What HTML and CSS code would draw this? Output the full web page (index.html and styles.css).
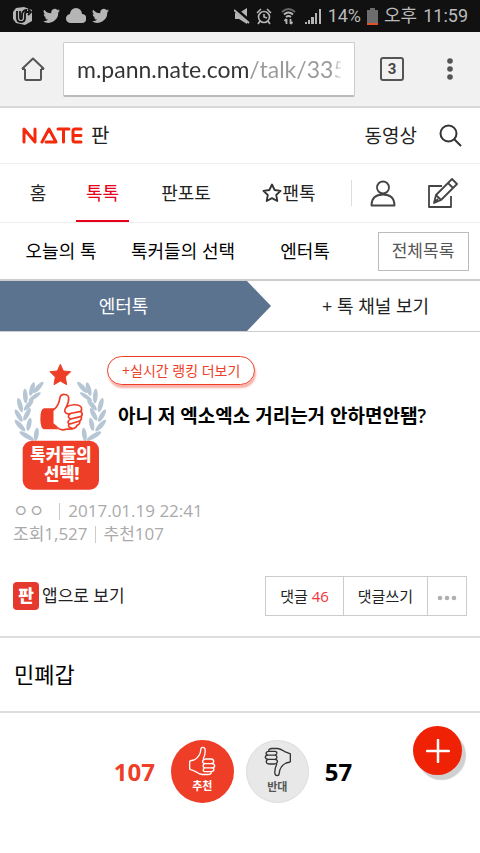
FILE: index.html
```
<!DOCTYPE html>
<html lang="ko">
<head>
    <meta charset="UTF-8">
    <meta name="viewport" content="width=device-width, initial-scale=1.0">
    <title>네이트 판</title>
    <link rel="stylesheet" href="styles.css">
</head>
<body>

    <!-- Shared shapes -->
    <svg class="defs" aria-hidden="true">
        <symbol id="bird" viewBox="0 0 24 20">
            <path d="M24 2.4a10 10 0 0 1-2.8.8A5 5 0 0 0 23.300.5a10 10 0 0 1-3.100 1.200A4.900 4.900 0 0 0 11.800 6.200 14 14 0 0 1 1.700 1a4.900 4.900 0 0 0 1.500 6.600A5 5 0 0 1 1 7a4.900 4.900 0 0 0 3.900 4.900 5 5 0 0 1-2.200.1 4.900 4.900 0 0 0 4.600 3.400A10 10 0 0 1 0 17.400 14 14 0 0 0 21.500 5a10 10 0 0 0 2.500-2.600z"/>
        </symbol>
        <symbol id="thumb" viewBox="294 136 88 90">
            <path d="M299 181L312 178C325 171 332 160 333 146C333 138 345 137 346 147C347 157 344 167 340 175M346 175H364C375 176 374 188 365 189H346M365 189C379 190 377 201 367 202H346M367 202C376 204 374 213 364 213H345M364 213C366 218 362 222 354 222H338C323 221 320 212 310 210L299 206V181M346 175C336 177 335 188 346 189C337 191 338 201 346 202C338 204 338 213 345 213"/>
        </symbol>
        <symbol id="laurel" viewBox="39 54 282 384" overflow="visible">
            <ellipse cx="60" cy="242" rx="7" ry="23" transform="rotate(-42 60 242)"/>
            <ellipse cx="56" cy="212" rx="7" ry="21" transform="rotate(-30 56 212)"/>
            <ellipse cx="60" cy="180" rx="7" ry="22" transform="rotate(-16 60 180)"/>
            <ellipse cx="76" cy="153" rx="7" ry="22" transform="rotate(-4 76 153)"/>
            <ellipse cx="96" cy="132" rx="7" ry="21" transform="rotate(16 96 132)"/>
            <ellipse cx="115" cy="127" rx="7" ry="22" transform="rotate(42 115 127)"/>
            <ellipse cx="104" cy="155" rx="6" ry="22" transform="rotate(55 104 155)"/>
            <ellipse cx="86" cy="180" rx="7" ry="21" transform="rotate(40 86 180)"/>
            <ellipse cx="81" cy="208" rx="7" ry="21" transform="rotate(28 81 208)"/>
            <ellipse cx="87" cy="238" rx="7" ry="20" transform="rotate(12 87 238)"/>
            <ellipse cx="109" cy="268" rx="7" ry="20" transform="rotate(8 109 268)"/>
            <ellipse cx="80" cy="273" rx="7" ry="25" transform="rotate(-60 80 273)"/>
        </symbol>
    </svg>

    <!-- Phone status bar -->
    <div class="status">
        <div class="status-group">
            <svg width="20" height="20" viewBox="0 0 20 20">
                <path d="M3 2l8-1 8 3v11l-7 4-9-2-3-4V6z" fill="#b5b5b5"/>
                <path d="M4 5v7q0 4 4 4t4-4V8q0-2 2-2h2M7 5v6q0 2 1 2t1-2V8q1-4 5-4M15 3l3 3-3 3" fill="none" stroke="#111" stroke-width="1.800"/>
            </svg>
            <svg class="bird first-bird" width="17" height="16"><use href="#bird"/></svg>
            <svg width="20" height="16" viewBox="0 0 20 16">
                <path d="M5 15a4.500 4.500 0 0 1-1-9 6 6 0 0 1 12 0 4.500 4.500 0 0 1 0 9z" fill="#b5b5b5"/>
            </svg>
            <svg class="bird" width="17" height="16"><use href="#bird"/></svg>
        </div>
        <div class="status-group status-right">
            <svg width="16" height="18" viewBox="0 0 16 18">
                <path d="M1 6h4l8-5v16l-8-5H1z" fill="#b5b5b5"/>
                <path d="M0 1l16 14" stroke="#111" stroke-width="4"/>
                <path d="M0 3l15 13" stroke="#b5b5b5" stroke-width="2"/>
            </svg>
            <svg width="16" height="17" viewBox="0 0 16 17" fill="none" stroke="#b5b5b5" stroke-width="1.600">
                <circle cx="8" cy="9" r="5.500"/>
                <path d="M8 6v3l3 1M1 5l4-4M15 5l-4-4M4 13l-2 3M12 13l2 3"/>
            </svg>
            <svg class="wifi" width="15" height="18" viewBox="0 0 15 18" fill="none" stroke="#b5b5b5" stroke-width="1.800">
                <path d="M1 5q6.500-6 13 0" stroke="#666"/>
                <path d="M3 7.500q4.500-4 9 0M5 10q2.500-2 5 0M5.500 17v-5M3.500 14l2-2M9.500 12v5M11.500 15l-2 2"/>
            </svg>
            <svg width="17" height="17" viewBox="0 0 17 17" fill="#b5b5b5">
                <path d="M0 14h2v2H0zM3 12h2v4H3zM6 9h3v7H6zM10 5h2v11h-2zM14 1h2v15h-2z"/>
            </svg>
            <span>14%</span>
            <svg width="11" height="17" viewBox="0 0 11 17">
                <path d="M3 0h5v2h3v15H0V2h3z" fill="#6d6d6d"/>
                <path d="M0 15h11v2H0z" fill="#e0512b"/>
            </svg>
            <span>오후</span>
            <span>11:59</span>
        </div>
    </div>

    <!-- Browser toolbar -->
    <div class="toolbar">
        <button class="tool" aria-label="홈으로">
            <svg width="24" height="25" viewBox="0 0 24 25" fill="none" stroke="#555" stroke-width="2" stroke-linejoin="round">
                <path d="M4 12v10q0 1 1 1h14q1 0 1-1V12M1 12h3M20 12h3M1 12L12 1.500 23 12"/>
            </svg>
        </button>
        <div class="url-box">
            <input class="url" type="text" aria-label="주소" value="m.pann.nate.com/talk/335">
        </div>
        <button class="tool tabs-count">3</button>
        <button class="tool menu" aria-label="메뉴">
            <svg width="6" height="22" viewBox="0 0 6 22" fill="#555">
                <circle cx="3" cy="3" r="2.800"/><circle cx="3" cy="11" r="2.800"/><circle cx="3" cy="19" r="2.800"/>
            </svg>
        </button>
    </div>

    <!-- Site header -->
    <header class="header">
        <a class="logo" href="#">
            <svg width="61" height="17" viewBox="0 0 61 17" fill="none" stroke="#f42a0c" stroke-width="3" stroke-linecap="round" stroke-linejoin="round" role="img" aria-label="NATE">
                <path d="M2 15V2l11 13V2M24 15h10L27 2l-7 13M36 2h11M41.500 2v13M59 2h-6q-2 0-2 2v9q0 2 2 2h6M51 8.500h8"/>
            </svg>
            <span>판</span>
        </a>
        <a class="video" href="#">동영상</a>
        <button class="search" aria-label="검색">
            <svg width="23" height="23" viewBox="0 0 23 23" fill="none" stroke="#333" stroke-width="2">
                <circle cx="9.500" cy="9.500" r="8"/><path d="M15 15l7 7"/>
            </svg>
        </button>
    </header>

    <nav class="nav">
        <a href="#">홈</a>
        <a class="active" href="#">톡톡</a>
        <a href="#">판포토</a>
        <a href="#">
            <svg width="20" height="20" viewBox="0 0 20 20" fill="none" stroke="#333" stroke-width="1.800" stroke-linejoin="round">
                <path d="M10 1.500l2.600 5.500 6 .8-4.400 4.200 1.100 6L10 15.100 4.700 18l1.100-6L1.400 7.800l6-.8z"/>
            </svg>
            팬톡
        </a>
        <div class="nav-icons">
            <a href="#" aria-label="내 정보">
                <svg width="26" height="27" viewBox="0 0 26 27" fill="none" stroke="#444" stroke-width="1.800">
                    <circle cx="13" cy="7.500" r="6"/><path d="M1.500 25.500q0-11 11.500-11t11.500 11z" stroke-linejoin="round"/>
                </svg>
            </a>
            <a href="#" aria-label="글쓰기">
                <svg width="31" height="31" viewBox="0 0 31 31" fill="none" stroke="#444" stroke-width="1.800" stroke-linejoin="round">
                    <path d="M15 8H2v21h22V18"/>
                    <path d="M7 25l2-8L25 1l5 5-16 16zM9 17l5 5M21 5l5 5M7 25l4-4"/>
                </svg>
            </a>
        </div>
    </nav>

    <nav class="subnav">
        <a href="#">오늘의 톡</a>
        <a href="#">톡커들의 선택</a>
        <a href="#">엔터톡</a>
        <button class="all-list">전체목록</button>
    </nav>

    <div class="channel">
        <a class="current" href="#">엔터톡</a>
        <a class="more" href="#">+ 톡 채널 보기</a>
    </div>

    <article>
        <div class="post-head">
            <div class="post-top">
                <svg class="badge" width="94" height="128" viewBox="39 54 282 384">
                    <path d="M181 58l9 20 22 2-16 16 4 23-19-11-19 11 4-23-16-16 22-2z" fill="#ee3e28" stroke="#ee3e28" stroke-width="3" stroke-linejoin="round"/>
                    <g fill="#b7c6d4">
                        <use href="#laurel" x="39" y="54" width="282" height="384"/>
                        <use href="#laurel" x="39" y="54" width="282" height="384" transform="translate(362 0) scale(-1 1)"/>
                    </g>
                    <path d="M168 190H132Q121 192 121 221 121 252 134 253H176L158 238Z" fill="#ee3e28"/>
                    <path d="M163 192C175 184 178 170 180 158C182 145 205 145 206 159C207 170 203 178 199 186C210 178 237 176 244 187Q247 194 242 199 250 206 244 214 246 224 239 228 241 238 231 241 226 254 200 252C187 258 177 253 170 246L158 236V197Z" fill="#fff" stroke="#ee3e28" stroke-width="5" stroke-linejoin="round"/>
                    <path d="M199 186Q187 201 204 207L242 199M213 205Q198 215 211 222L244 214M210 223Q198 232 209 237L239 228M207 237Q202 247 215 249" fill="none" stroke="#ee3e28" stroke-width="5" stroke-linecap="round"/>
                    <rect x="68" y="287" width="229" height="147" rx="28" fill="#ee3e28"/>
                    <text class="badge-text" text-anchor="middle"><tspan x="183" y="348">톡커들의</tspan><tspan x="185" y="405">선택!</tspan></text>
                </svg>
                <div>
                    <a class="ranking" href="#">+실시간 랭킹 더보기</a>
                    <h1>아니 저 엑소엑소 거리는거 안하면안됌?</h1>
                </div>
            </div>
            <div class="meta">
                <div><span class="author">ㅇㅇ</span><span class="bar">2017.01.19 22:41</span></div>
                <div><span>조회1,527</span><span class="bar">추천107</span></div>
            </div>
            <div class="actions">
                <a class="app-link" href="#">
                    <svg width="26" height="28" viewBox="0 0 26 28">
                        <rect width="26" height="28" rx="4" fill="#e5392e"/>
                        <text class="app-text" x="13" y="20" text-anchor="middle">판</text>
                    </svg>
                    앱으로 보기
                </a>
                <div class="button-group">
                    <button>댓글 <em>46</em></button>
                    <button>댓글쓰기</button>
                    <button class="dots" aria-label="더보기">
                        <svg width="20" height="6" viewBox="0 0 20 6" fill="#b0b0b0">
                            <circle cx="3" cy="3" r="2.300"/><circle cx="10" cy="3" r="2.300"/><circle cx="17" cy="3" r="2.300"/>
                        </svg>
                    </button>
                </div>
            </div>
        </div>

        <p class="content">민폐갑</p>

        <div class="votes">
            <strong class="up-count">107</strong>
            <button class="vote up">
                <svg width="29" height="30"><use href="#thumb"/></svg>
                추천
            </button>
            <button class="vote down">
                <svg width="29" height="30"><use href="#thumb"/></svg>
                반대
            </button>
            <strong>57</strong>
            <button class="fab" aria-label="추가">
                <svg width="24" height="24" viewBox="0 0 24 24" stroke="#fff" stroke-width="2.500" stroke-linecap="round">
                    <path d="M12 1v22M1 12h22"/>
                </svg>
            </button>
        </div>
    </article>

</body>
</html>
```
FILE: styles.css
```
* {
    box-sizing: border-box;
}
body {
    margin: 0;
    background-color: #fff;
    color: #222;
    font-family: "Open Sans", "Noto Sans CJK KR", sans-serif;
    font-size: 18px;
    line-height: 24px;
}
a {
    color: inherit;
    text-decoration: none;
}
button {
    padding: 0;
    border: 0;
    background: none;
    color: inherit;
    font: inherit;
    cursor: pointer;
}
svg {
    display: block;
    flex: none;
}
.defs {
    position: absolute;
    width: 0;
    height: 0;
}

/* Status bar */
.status {
    display: flex;
    justify-content: space-between;
    height: 32px;
    padding: 0 12px 0 13px;
    background-color: #111;
    color: #bbb;
    font-family: Roboto, "Noto Sans CJK KR", sans-serif;
}
.status-group {
    display: flex;
    align-items: center;
    gap: 6px;
}
.first-bird {
    margin-left: 4px;
}
.wifi {
    margin: 0 3px;
}
.bird {
    fill: #b5b5b5;
}

/* Browser toolbar */
.toolbar {
    display: flex;
    align-items: center;
    height: 76px;
    padding: 0 0 0 2px;
    background-color: #f1f1f1;
    border-bottom: 2px solid #d8d8d8;
}
.tool {
    display: flex;
    align-items: center;
    justify-content: center;
    width: 61px;
    height: 48px;
}
.url-box {
    flex: 1;
    min-width: 0;
    height: 55px;
    padding: 0 13px;
    background-color: #fff;
    border: 1px solid #ccc;
    border-bottom: 2px solid #bbb;
    border-radius: 2px;
}
.url {
    width: 100%;
    height: 52px;
    padding: 0;
    border: 0;
    outline: 0;
    background: linear-gradient(to right, #333 173px, #999 173px, #999 255px, #eee);
    background-clip: text;
    color: transparent;
    font-family: Lato, sans-serif;
    font-size: 23px;
}
.tabs-count {
    width: 24px;
    height: 24px;
    margin: 0 15px 0 25px;
    border: 2px solid #555;
    border-radius: 3px;
    color: #444;
    font-family: Roboto, sans-serif;
    font-size: 15px;
    font-weight: 700;
}

/* Site header */
.header {
    display: flex;
    align-items: center;
    height: 56px;
    padding: 0 18px 0 22px;
    border-bottom: 1px solid #eee;
}
.logo {
    display: flex;
    align-items: center;
    gap: 8px;
    margin-right: auto;
    font-size: 20px;
}
.video {
    margin-right: 22px;
    font-size: 19px;
}
.nav {
    display: grid;
    grid-template-columns: 76fr 53fr 114fr 92fr 145fr;
    height: 59px;
    border-bottom: 1px solid #eee;
}
.nav > a {
    display: flex;
    align-items: center;
    justify-content: center;
}
.nav .active {
    color: #e60019;
    border-bottom: 2px solid #e60019;
    padding-top: 2px;
}
.nav-icons {
    display: flex;
    align-items: center;
    justify-content: space-between;
    height: 26px;
    margin: auto 22px auto 16px;
    padding-left: 18px;
    border-left: 1px solid #ddd;
}
.subnav {
    display: grid;
    grid-template-columns: 122fr 122fr 122fr 114fr;
    align-items: center;
    justify-items: center;
    height: 58px;
    border-bottom: 2px solid #ccc;
    color: #000;
}
.all-list {
    width: 91px;
    height: 39px;
    border: 1px solid #bbb;
    color: #555;
    font-size: 17px;
}
.channel {
    display: grid;
    grid-template-columns: 271fr 209fr;
    height: 51px;
    border-bottom: 1px solid #ccc;
    line-height: 50px;
    text-align: center;
}
.current {
    padding-right: 24px;
    background-color: #5b738f;
    color: #fff;
    clip-path: polygon(0 0, 247px 0, 100% 50%, 247px 100%, 0 100%);
}

/* Post */
.post-head {
    padding: 24px 13px 20px;
    border-bottom: 2px solid #ddd;
}
.post-top {
    display: flex;
}
.badge {
    margin-top: 7px;
}
.badge-text {
    fill: #fff;
    font-size: 50px;
    font-weight: 900;
}
.ranking {
    display: inline-block;
    height: 29px;
    padding: 0 14px;
    border: 1px solid #ee3e28;
    border-radius: 15px;
    box-shadow: 1px 3px 2px #f8b0a8;
    color: #ee3e28;
    font-size: 14px;
    line-height: 27px;
}
h1 {
    margin: 18px 0 0 11px;
    color: #000;
    font-size: 19px;
    font-weight: 600;
    line-height: 26px;
}
.meta {
    margin-top: 8px;
    color: #aaa;
    font-size: 17px;
    line-height: 23px;
}
.author {
    margin-right: 8px;
}
.bar::before {
    content: "";
    display: inline-block;
    width: 1px;
    height: 17px;
    margin: 0 8px 0 7px;
    background-color: #ccc;
    vertical-align: -3px;
}
.actions {
    display: flex;
    align-items: center;
    justify-content: space-between;
    margin-top: 31px;
}
.app-link {
    display: flex;
    align-items: center;
    gap: 3px;
    font-size: 17px;
}
.app-text {
    fill: #fff;
    font-size: 17px;
    font-weight: 900;
}
.button-group {
    display: flex;
    height: 40px;
    border: 1px solid #ccc;
    font-size: 15px;
}
.button-group button {
    padding: 0 14px;
}
.button-group button + button {
    border-left: 1px solid #ccc;
}
.button-group .dots {
    padding: 4px 9px 0;
}
em {
    color: #f0353b;
    font-style: normal;
}
.content {
    margin: 0;
    padding: 21px 14px 22px;
    border-bottom: 2px solid #ddd;
    color: #000;
    font-size: 22px;
    line-height: 30px;
}

/* Votes */
.votes {
    position: relative;
    display: flex;
    align-items: center;
    justify-content: center;
    gap: 12px;
    padding: 27px 14px 24px 0;
    color: #000;
    font-size: 24px;
}
.votes strong {
    margin: 0 4px;
}
.up-count {
    color: #ee3e28;
}
.vote {
    display: flex;
    flex-direction: column;
    align-items: center;
    width: 63px;
    height: 63px;
    padding-top: 6px;
    border-radius: 50%;
    font-size: 11px;
    font-weight: 700;
    line-height: 20px;
}
.vote svg {
    fill: none;
    stroke: currentColor;
    stroke-width: 4px;
    stroke-linejoin: round;
}
.up {
    background-color: #ee3e28;
    color: #fff;
}
.down {
    background-color: #e8e8e8;
    border: 1px solid #ddd;
    color: #555;
}
.down svg {
    color: #333;
    transform: rotate(180deg);
}
.fab {
    position: absolute;
    top: 13px;
    right: 18px;
    display: flex;
    align-items: center;
    justify-content: center;
    width: 49px;
    height: 49px;
    border-radius: 50%;
    background-color: #ef2206;
    box-shadow: 4px 5px 1px #d0d0d0;
}
```
